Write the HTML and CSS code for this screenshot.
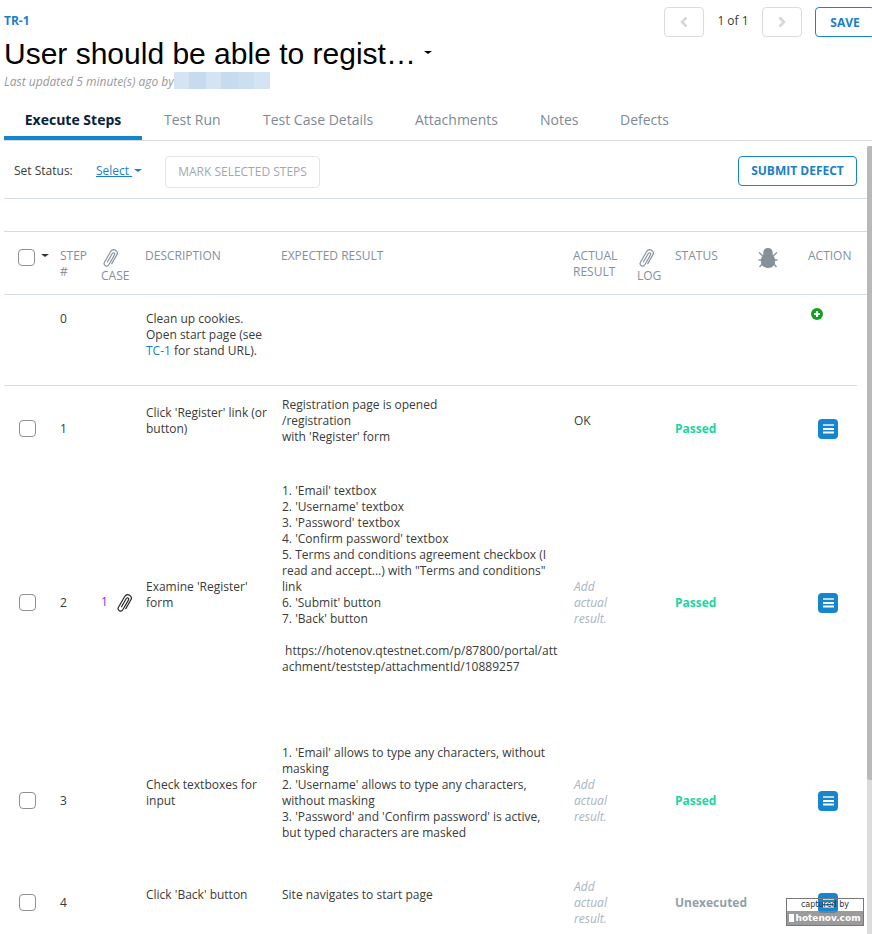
FILE: index.html
```html
<!DOCTYPE html>
<html lang="en">
<head>
<meta charset="utf-8">
<title>TR-1 Test Run</title>
<link rel="stylesheet" href="styles.css">
</head>
<body>
<svg class="defs" width="0" height="0">
  <symbol id="clip" viewBox="0 0 16 20"><path transform="translate(8 10) rotate(30)" d="M3.500 4.500V-5.500a3.500 3.500 0 0 0-7 0V7a2.500 2.500 0 0 0 5 0V-4.500a1.300 1.300 0 0 0-2.600 0V5" fill="none" stroke="currentColor" stroke-width="1.150" stroke-linecap="round"/></symbol>
  <symbol id="menu" viewBox="0 0 20 20"><path d="M5 6h11" stroke="#fff" stroke-width="2" opacity=".7"/><path d="M5 10h11M5 13.500h11" fill="none" stroke="#fff" stroke-width="2"/></symbol>
</svg>
<header class="top">
  <div class="heading">
    <a class="id">TR-1</a>
    <h1><span>User should be able to regist…</span><i class="caret"></i></h1>
    <p class="updated"><span>Last updated 5 minute(s) ago by</span><span class="user"></span></p>
  </div>
  <div class="pager">
    <button class="nav"><svg width="10" height="12" viewBox="0 0 10 12"><path d="M7.500 1.500 3 6l4.500 4.500"/></svg></button>
    <span class="count">1 of 1</span>
    <button class="nav"><svg width="10" height="12" viewBox="0 0 10 12"><path d="M2.500 1.500 7 6l-4.500 4.500"/></svg></button>
    <button class="primary save">SAVE</button>
  </div>
</header>
<nav class="tabs">
  <a class="active">Execute Steps</a><a class="t2">Test Run</a><a class="t3">Test Case Details</a><a class="t4">Attachments</a><a class="t5">Notes</a><a class="t6">Defects</a>
</nav>
<main>
  <div class="content">
    <div class="toolbar">
      <span class="label">Set Status:</span>
      <a class="select"><u>Select&nbsp;</u><i class="caret"></i></a>
      <button class="mark">MARK SELECTED STEPS</button>
      <button class="primary submit">SUBMIT DEFECT</button>
    </div>
    <div class="spacer"></div>
    <div class="row head">
      <div class="pick"><i class="box"></i><i class="caret"></i></div>
      <div>STEP<br>#</div>
      <div class="clipcell"><svg class="clip"><use href="#clip"/></svg><span>CASE</span></div>
      <div class="hd">DESCRIPTION</div>
      <div class="he">EXPECTED RESULT</div>
      <div class="ha">ACTUAL<br>RESULT</div>
      <div class="clipcell"><svg class="clip"><use href="#clip"/></svg><span>LOG</span></div>
      <div>STATUS</div>
      <div class="bug"><svg width="20" height="20" viewBox="0 0 20 20"><path d="M5.500 6.500C4.500 3 6.500 0 10 0s5.500 3 4.500 6.500C19 11 18 20 10 20S1 11 5.500 6.500z" fill="#84919b"/><path d="M5 8 1 4.500M4 12H.5M5 15l-3.500 4M15 8l4-3.500M16 12h3.500M15 15l3.500 4" stroke="#84919b" stroke-width="1.300"/></svg></div>
      <div>ACTION</div>
    </div>
    <div class="row r0">
      <div></div><div>0</div><div></div>
      <div>Clean up cookies.<br>Open start page (see<br><a>TC-1</a> for stand URL).</div>
      <div></div><div></div><div></div><div></div><div></div>
      <div class="add"><svg width="12" height="12" viewBox="0 0 12 12"><circle cx="6" cy="6" r="6" fill="#13a022"/><path d="M6 3v6M3 6h6" stroke="#fff" stroke-width="2"/></svg></div>
    </div>
    <div class="row r1">
      <div class="pick"><i class="box"></i></div><div>1</div><div></div>
      <div class="text">Click 'Register' link (or<br>button)</div>
      <div class="text">Registration page is opened<br>/registration<br>with 'Register' form</div>
      <div class="text">OK</div><div></div>
      <div class="passed">Passed</div><div></div>
      <div class="act"><svg width="20" height="20"><use href="#menu"/></svg></div>
    </div>
    <div class="row r2">
      <div class="pick"><i class="box"></i></div><div>2</div>
      <div class="attached"><a>1</a><svg class="clip"><use href="#clip"/></svg></div>
      <div class="text">Examine 'Register'<br>form</div>
      <div class="text long">1. 'Email' textbox<br>2. 'Username' textbox<br>3. 'Password' textbox<br>4. 'Confirm password' textbox<br>5. Terms and conditions agreement checkbox (I<br>read and accept...) with "Terms and conditions"<br>link<br>6. 'Submit' button<br>7. 'Back' button<br><br>&nbsp;https://hotenov.qtestnet.com/p/87800/portal/att<br>achment/teststep/attachmentId/10889257</div>
      <div class="hint">Add<br>actual<br>result.</div><div></div>
      <div class="passed">Passed</div><div></div>
      <div class="act"><svg width="20" height="20"><use href="#menu"/></svg></div>
    </div>
    <div class="row r3">
      <div class="pick"><i class="box"></i></div><div>3</div><div></div>
      <div class="text">Check textboxes for<br>input</div>
      <div class="text">1. 'Email' allows to type any characters, without<br>masking<br>2. 'Username' allows to type any characters,<br>without masking<br>3. 'Password' and 'Confirm password' is active,<br>but typed characters are masked</div>
      <div class="hint">Add<br>actual<br>result.</div><div></div>
      <div class="passed">Passed</div><div></div>
      <div class="act"><svg width="20" height="20"><use href="#menu"/></svg></div>
    </div>
    <div class="row r4">
      <div class="pick"><i class="box"></i></div><div>4</div><div></div>
      <div class="text">Click 'Back' button</div>
      <div class="text">Site navigates to start page</div>
      <div class="hint">Add<br>actual<br>result.</div><div></div>
      <div class="unexecuted">Unexecuted</div><div></div>
      <div class="act"><svg width="20" height="20"><use href="#menu"/></svg></div>
    </div>
  </div>
  <div class="scroll"><div class="thumb"></div></div>
</main>
<div class="stamp"><div class="by">captured by</div><div class="site"><i></i>hotenov.com</div></div>
</body>
</html>
```
FILE: styles.css
```css
* { box-sizing: border-box; }
body {
  margin: 0;
  width: 872px;
  height: 934px;
  overflow: hidden;
  position: relative;
  background: #fff;
  color: #3a3a3a;
  font: 12px/16px "Open Sans", sans-serif;
}
.defs { position: absolute; }
button { font: inherit; background: #fff; padding: 0; white-space: nowrap; border-radius: 4px; }
a { color: #1a7fc8; }
.caret {
  display: inline-block;
  border: 4px solid transparent;
  border-top: 3px solid currentColor;
  border-bottom: 0;
}
.top { display: flex; height: 98px; padding-left: 4px; }
.heading { width: 660px; flex: none; padding-top: 13px; }
.id { display: block; font-weight: 700; }
h1 {
  margin: 5px 0 0;
  height: 40px;
  display: flex;
  align-items: center;
  color: #000;
  font: 30px/40px "Liberation Sans", sans-serif;
}
h1 .caret { margin: -3px 0 0 8px; }
.updated { margin: 0; display: flex; font-style: italic; color: #999; white-space: nowrap; }
.updated span:first-child { width: 170px; }
.user {
  width: 96px;
  height: 17px;
  margin-top: -2px;
  background: linear-gradient(90deg, #d5e4f3 16%, #c7dbef 16% 33%, #d5e4f3 33% 49%, #c7dbef 49% 67%, #cbdff0 67% 83%, #d5e4f3 83%);
}
.pager { display: flex; align-items: flex-start; padding-top: 7px; flex: none; }
.nav { width: 40px; height: 30px; border: 1px solid #dcdcdc; }
.nav svg { display: block; margin: 0 auto; fill: none; stroke: #d6d6d6; stroke-width: 2.5; }
.count { width: 58px; text-align: center; line-height: 27px; }
.primary { border: 1px solid #1585cd; color: #1a80c8; font-weight: 700; }
.save { width: 60px; height: 30px; margin-left: 13px; padding-top: 1px; }
.tabs {
  display: flex;
  height: 43px;
  margin-left: 4px;
  border-bottom: 1px solid #d5dae4;
  font-size: 14px;
}
.tabs a { color: #7f8995; line-height: 43px; white-space: nowrap; }
.tabs .active { width: 138px; height: 42px; border-bottom: 4px solid #1585cd; color: #07223c; font-weight: 700; text-align: center; }
.t2 { margin-left: 22px; width: 99px; }
.t3 { width: 152px; }
.t4 { width: 125px; }
.t5 { width: 80px; }
main { display: flex; height: 793px; }
.content { width: 863px; margin-left: 4px; }
.toolbar { display: flex; align-items: center; height: 58px; border-bottom: 1px solid #d5dce6; padding: 2px 10px 0; }
.label { width: 82px; }
.select { width: 69px; display: flex; align-items: center; }
.select .caret { margin-left: 2px; }
.mark { width: 155px; height: 32px; border: 1px solid #e4e6e6; color: #a3a8ac; margin-top: 2px; }
.submit { width: 119px; height: 30px; margin-left: auto; padding-top: 1px; }
.spacer { height: 33px; border-bottom: 1px solid #d5dce6; }
.row {
  display: grid;
  grid-template-columns: 56px 42px 44px 136px 292px 64px 37px 83px 50px 52px;
  align-items: center;
  white-space: nowrap;
}
.head { height: 63px; border-bottom: 1px solid #d5dce6; align-items: start; padding-top: 16px; color: #84909c; }
.head > .hd, .head > .he, .head > .ha { margin-left: -1px; }
.pick { display: flex; align-items: center; padding: 0 0 2px 15px; color: #333; }
.box { width: 17px; height: 17px; border: 1px solid #909090; border-radius: 4px; }
.head .pick { padding-left: 14px; padding-top: 1px; }
.head .pick .caret { margin: -4px 0 0 6px; }
.clip { display: block; width: 16px; height: 20px; }
.head .clipcell .clip { margin-left: 2px; }
.head .clipcell { margin-left: -1px; }
.clipcell span { display: block; }
.bug svg { display: block; }
.r0 { width: 853px; height: 91px; align-items: start; padding-top: 16px; border-bottom: 1px solid #d5dce6; }
.r1 { height: 86px; }
.r2 { height: 262px; }
.r3 { height: 134px; }
.r4 { height: 70px; }
.text { padding-bottom: 16px; }
.long { padding-bottom: 48px; }
.add { padding: 0 0 0 3px; margin-top: -3px; }
.act { width: 20px; height: 20px; margin-left: 10px; border-radius: 4px; background: #1585cd; }
.act svg, .add svg { display: block; }
.passed { color: #1ad6a0; font-weight: 700; }
.unexecuted { color: #929fac; font-weight: 700; }
.hint { color: #aab3c2; font-style: italic; }
.attached { display: flex; align-items: center; gap: 9px; margin-left: -1px; color: #222; }
.attached a { color: #7a30e0; }
.attached a { margin-top: -2px; }
.scroll { width: 5px; margin-top: 5px; background: #dcdcdc; }
.thumb { height: 634px; background: #b9b9b9; border-radius: 3px 0 0 3px; }
.stamp {
  position: absolute;
  left: 786px;
  top: 898px;
  width: 78px;
  height: 28px;
  border: 1px solid #777;
  color: #333;
  font: 8px/12px "DejaVu Sans", sans-serif;
  text-align: center;
}
.by { height: 12px; }
.site { height: 14px; background: rgba(130, 130, 130, .8); color: #fff; font-size: 9px; font-weight: 700; line-height: 13px; white-space: nowrap; display: flex; align-items: center; justify-content: center; }
.site i { width: 5px; height: 8px; background: #fff; margin-right: 1px; }
```
